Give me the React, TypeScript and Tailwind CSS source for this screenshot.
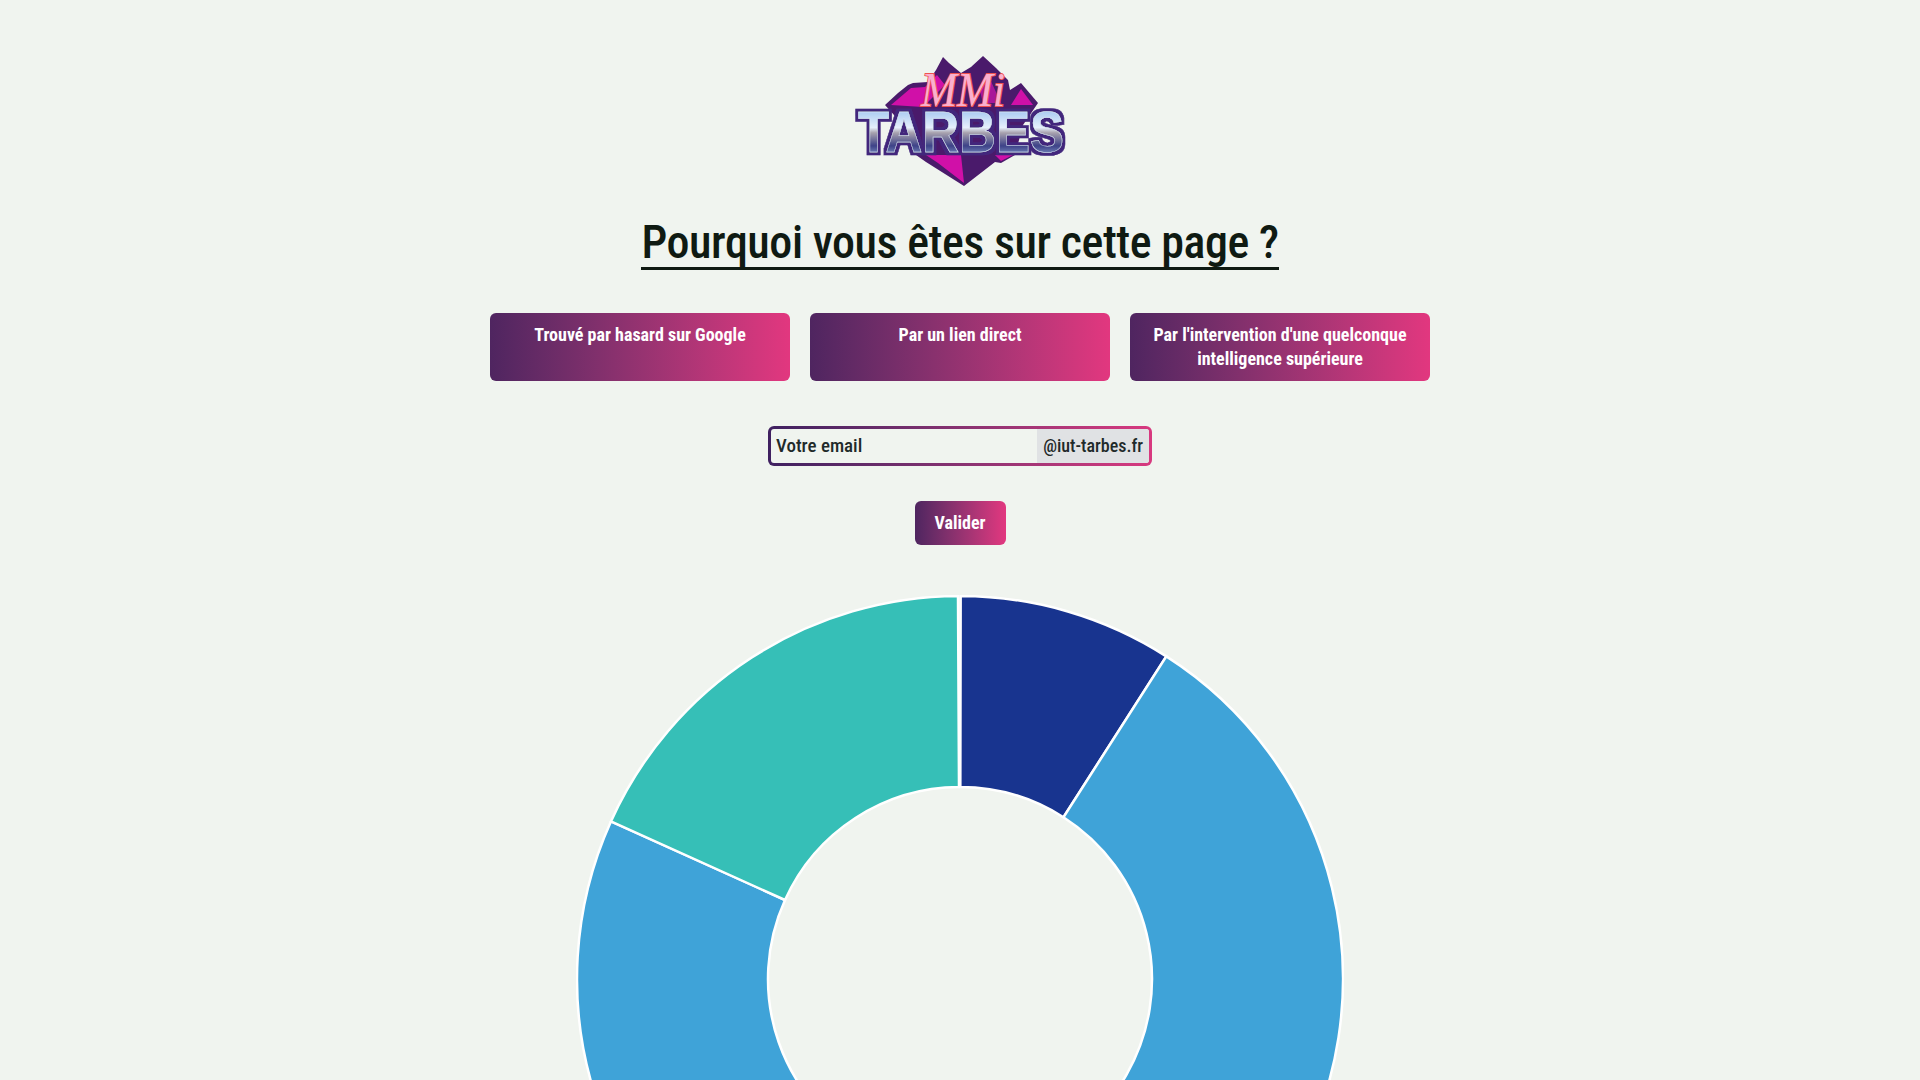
import React from 'react';

const CX = 384;
const CY = 384;
const OUTER = 383;
const INNER = 192;

const polar = (r: number, deg: number) => {
  const a = (deg * Math.PI) / 180;
  return `${CX + r * Math.sin(a)} ${CY - r * Math.cos(a)}`;
};

const slice = (from: number, to: number) => {
  const large = to - from > 180 ? 1 : 0;
  return `M ${polar(OUTER, from)} A ${OUTER} ${OUTER} 0 ${large} 1 ${polar(OUTER, to)} L ${polar(INNER, to)} A ${INNER} ${INNER} 0 ${large} 0 ${polar(INNER, from)} Z`;
};

const segments = [
  { from: 0.1, to: 32.6, color: '#18348f' },
  { from: 32.6, to: 294.3, color: '#3fa3d8' },
  { from: 294.3, to: 359.7, color: '#36bfb7' },
];

const Logo = () => (
  <svg width="214" height="134" viewBox="0 0 214 134" className="block overflow-visible">
    <defs>
      <linearGradient id="chrome" x1="0" y1="0" x2="0" y2="1">
        <stop offset="0" stopColor="#7fb0ea" />
        <stop offset="0.44" stopColor="#e6f0fc" />
        <stop offset="0.52" stopColor="#a8a2ae" />
        <stop offset="0.72" stopColor="#3d4288" />
        <stop offset="1" stopColor="#b4d6f6" />
      </linearGradient>
      <filter id="halo" x="-5%" y="-10%" width="110%" height="120%">
        <feMorphology in="SourceAlpha" operator="dilate" radius="2.5" result="fat" />
        <feFlood floodColor="#43277c" />
        <feComposite in2="fat" operator="in" result="edge" />
        <feMerge>
          <feMergeNode in="edge" />
          <feMergeNode in="SourceGraphic" />
        </feMerge>
      </filter>
    </defs>
    <polygon
      points="90,2 96,8 108,18 118,12 130,1 143,13 155,25 157,35 168,28 185,48 170,70 162,100 148,108 142,107 111,131 73,107 63,100 50,70 32,50 45,38 55,30 60,28 75,27 83,15"
      fill="#4a1a6b"
    />
    <polygon points="38,50 58,33 72,32 84,20 92,30 70,52" fill="#d010a8" />
    <polygon points="158,50 168,34 180,50" fill="#d010a8" />
    <polygon points="126,32 136,22 148,48 130,48" fill="#a8189a" />
    <polygon points="73,100 108,100 111,128 85,108" fill="#d010a8" />
    <polygon points="142,100 160,100 148,106" fill="#d010a8" />
    <text
      x="110"
      y="51"
      textAnchor="middle"
      fontFamily="'Liberation Serif', serif"
      fontStyle="italic"
      fontSize="48"
      textLength="84"
      lengthAdjust="spacingAndGlyphs"
      fill="#f9b0cf"
      stroke="#f0524f"
      strokeWidth="1.8"
      paintOrder="stroke"
    >
      MMi
    </text>
    <text
      x="108"
      y="97"
      textAnchor="middle"
      fontFamily="'Liberation Sans', sans-serif"
      fontWeight="700"
      fontSize="58"
      textLength="206"
      lengthAdjust="spacingAndGlyphs"
      fill="url(#chrome)"
      stroke="#dfeafa"
      strokeWidth="0.5"
      filter="url(#halo)"
    >
      TARBES
    </text>
  </svg>
);

const choices = [
  'Trouvé par hasard sur Google',
  'Par un lien direct',
  "Par l'intervention d'une quelconque intelligence supérieure",
];

export default function App() {
  return (
    <div className="h-screen overflow-hidden bg-[#f0f4ef] font-['Roboto',sans-serif] font-stretch-extra-condensed text-[#0f1a12]">
      <div className="flex flex-col items-center pt-[55px]">
        <Logo />

        <h1 className="mt-[28px] border-b-[3px] border-[#0f1a12] text-[46px] leading-[50px] font-medium tracking-[-0.45px]">
          Pourquoi vous êtes sur cette page ?
        </h1>

        <div className="mt-[43px] flex gap-5">
          {choices.map(label => (
            <button
              key={label}
              className="flex w-[300px] items-start justify-center rounded-md bg-gradient-to-r from-[#4f2560] to-[#e2377f] p-2.5 text-center text-lg leading-6 font-bold text-white"
            >
              {label}
            </button>
          ))}
        </div>

        <div className="mt-[45px] w-[384px] rounded-md bg-gradient-to-r from-[#3f2060] to-[#d8397f] p-[3px]">
          <div className="flex h-[34px] items-stretch overflow-hidden rounded-[3px] bg-[#f0f4ef] text-lg font-medium">
            <div className="flex flex-1 items-center pl-[5px] text-[19px] text-[#1f2a2a]">Votre email</div>
            <div className="flex items-center bg-[#e0e2e4] px-[6px] text-[#1f2a2a]">@iut-tarbes.fr</div>
          </div>
        </div>

        <button className="mt-[35px] h-[44px] w-[91px] rounded-md bg-gradient-to-r from-[#4f2560] to-[#e2377f] text-lg font-bold text-white">
          Valider
        </button>

        <svg width="768" height="768" viewBox="0 0 768 768" className="mt-[50px] block shrink-0">
          {segments.map(s => (
            <path key={s.from} d={slice(s.from, s.to)} fill={s.color} stroke="#ffffff" strokeWidth="2.5" />
          ))}
        </svg>
      </div>
    </div>
  );
}
